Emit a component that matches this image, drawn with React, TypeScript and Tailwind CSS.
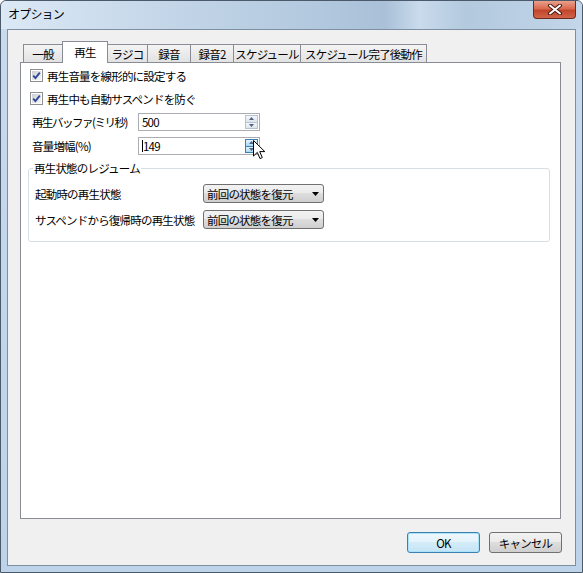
import React from "react";

const tabs = [
  { label: "一般", w: 40 },
  { label: "再生", w: 46, active: true },
  { label: "ラジコ", w: 41 },
  { label: "録音", w: 44 },
  { label: "録音2", w: 44 },
  { label: "スケジュール", w: 68 },
  { label: "スケジュール完了後動作", w: 127 },
];

function Check() {
  return (
    <div className="w-[13px] h-[13px] border border-[#8e8f8f] bg-white p-px shrink-0">
      <div className="w-full h-full bg-gradient-to-br from-[#cbcfd5] to-[#f6f6f6] flex items-center justify-center">
        <svg width="9" height="9" viewBox="0 0 9 9">
          <path d="M1.2 4.6 L3.4 7 L7.8 1.6" fill="none" stroke="#2b4597" strokeWidth="1.8" />
        </svg>
      </div>
    </div>
  );
}

function Spin({ hot }: { hot?: boolean }) {
  const half = hot
    ? "border-[#3c7fb1] bg-gradient-to-b from-[#e5f4fc] to-[#a7d9f5]"
    : "border-[#b8c3d1] bg-gradient-to-b from-[#f5f7fa] to-[#dde4ec]";
  return (
    <div className="flex flex-col w-[13px] my-px mr-px">
      <div className={"h-[8px] border flex items-center justify-center " + half}>
        <svg width="5" height="3" viewBox="0 0 5 3">
          <path d="M0 3 L2.5 0 L5 3 Z" fill="#4d6185" />
        </svg>
      </div>
      <div className={"h-[8px] -mt-px border flex items-center justify-center " + half}>
        <svg width="5" height="3" viewBox="0 0 5 3">
          <path d="M0 0 L5 0 L2.5 3 Z" fill="#4d6185" />
        </svg>
      </div>
    </div>
  );
}

function NumField({ value, hot, caret }: { value: string; hot?: boolean; caret?: boolean }) {
  return (
    <div className="w-[122px] h-[18px] border border-[#abadb3] bg-white flex shrink-0">
      <div className="flex-1 flex items-center pl-[3px]">
        {caret && <span className="w-px h-[12px] bg-black" />}
        <span>{value}</span>
      </div>
      <Spin hot={hot} />
    </div>
  );
}

function Combo() {
  return (
    <div className="w-[121px] h-[19px] shrink-0 border border-[#707070] rounded-[3px] bg-[linear-gradient(180deg,#f2f2f2_0%,#ebebeb_45%,#dddddd_50%,#cfcfcf_100%)] flex items-center pl-[3px] pr-[4px]">
      <span className="flex-1">前回の状態を復元</span>
      <svg width="7" height="4" viewBox="0 0 7 4">
        <path d="M0 0 L7 0 L3.5 4 Z" fill="#000" />
      </svg>
    </div>
  );
}

export default function App() {
  return (
    <div className="relative w-[583px] h-[573px] flex flex-col border border-[#4a5a6b] rounded-t-[6px] bg-gradient-to-b from-[#c8daee] to-[#bcd3ea] font-['Noto_Sans_CJK_JP','Noto_Sans',sans-serif] text-[11.5px] leading-[14px] tracking-[-0.8px] text-black whitespace-nowrap overflow-hidden">
      {/* title bar */}
      <div className="h-[28px] flex items-start justify-between rounded-t-[5px] bg-[linear-gradient(90deg,#dce8f5_0%,#c6d8ea_25%,#b2c8de_55%,#a9c0d8_66%,#c9dbec_72%,#b3c9de_80%,#c3d6ea_100%)]">
        <span className="pl-[7px] pt-[6px] text-[12px]">オプション</span>
        <div className="mr-[6px] w-[43px] h-[18px] rounded-b-[4px] border border-t-0 border-[#6b2b1f] bg-[linear-gradient(180deg,#eaa08c_0%,#d86a4f_45%,#c2452b_55%,#d0654a_100%)] flex items-center justify-center">
          <svg width="16" height="11" viewBox="0 0 16 11">
            <path d="M3 1.5 L13 9.5 M13 1.5 L3 9.5" stroke="#4a1a12" strokeWidth="4" strokeLinecap="round" />
            <path d="M3 1.5 L13 9.5 M13 1.5 L3 9.5" stroke="#fff" strokeWidth="2" strokeLinecap="round" />
          </svg>
        </div>
      </div>

      {/* client area */}
      <div className="flex-1 mx-[6px] mb-[6px] border border-[#7e8fa1] bg-[#f0f0f0] flex flex-col pl-[12px] pr-[14px] pt-[11px]">
        <div className="flex items-end h-[22px] -mb-px ml-[3px] relative z-10">
          {tabs.map((t, i) =>
            t.active ? (
              <div
                key={t.label}
                style={{ width: t.w }}
                className={"h-[22px] border border-b-0 border-[#898c95] bg-white flex items-start justify-center pt-[3px] relative z-10 " + (i ? "-ml-px" : "")}
              >
                {t.label}
              </div>
            ) : (
              <div
                key={t.label}
                style={{ width: t.w }}
                className={"h-[18px] mb-px border border-b-0 border-[#898c95] bg-gradient-to-b from-[#f4f4f4] to-[#e2e2e2] flex items-center justify-center " + (i ? "-ml-px" : "")}
              >
                {t.label}
              </div>
            )
          )}
        </div>

        <div className="flex-1 border border-[#898c95] bg-white flex flex-col">
          <div className="flex items-center gap-[4px] ml-[9px] mt-[6px] h-[13px]">
            <Check />
            <span>再生音量を線形的に設定する</span>
          </div>
          <div className="flex items-center gap-[4px] ml-[9px] mt-[10px] h-[13px]">
            <Check />
            <span>再生中も自動サスペンドを防ぐ</span>
          </div>
          <div className="flex items-center ml-[11px] mt-[8px]">
            <span className="w-[106px] shrink-0 tracking-[-1.5px]">再生バッファ(ミリ秒)</span>
            <NumField value="500" />
          </div>
          <div className="flex items-center ml-[11px] mt-[6px]">
            <span className="w-[106px] shrink-0">音量増幅(%)</span>
            <NumField value="149" hot caret />
          </div>

          <fieldset className="ml-[7px] mr-[10px] mt-[6px] border border-[#d5dfe5] rounded-[3px] pb-[12px]">
            <legend className="ml-[4px] px-px">再生状態のレジューム</legend>
            <div className="flex items-center pl-[6px] mt-[9px]">
              <span className="w-[168px] shrink-0">起動時の再生状態</span>
              <Combo />
            </div>
            <div className="flex items-center pl-[6px] mt-[7px]">
              <span className="w-[168px] shrink-0">サスペンドから復帰時の再生状態</span>
              <Combo />
            </div>
          </fieldset>
        </div>

        <div className="flex justify-end gap-[9px] pt-[13px] pb-[12px] mr-[-1px]">
          <div className="w-[73px] h-[21px] border border-[#3c7fb1] rounded-[3px] shadow-[inset_0_0_0_1px_#a8e2fb] bg-[linear-gradient(180deg,#eef8fd_0%,#e4f3fb_45%,#d3ecf9_50%,#c6e4f5_100%)] flex items-center justify-center">
            OK
          </div>
          <div className="w-[73px] h-[21px] border border-[#707070] rounded-[3px] bg-[linear-gradient(180deg,#f2f2f2_0%,#ebebeb_45%,#dddddd_50%,#cfcfcf_100%)] flex items-center justify-center">
            キャンセル
          </div>
        </div>
      </div>

      {/* mouse pointer */}
      <svg className="absolute left-[252px] top-[139px]" width="13" height="20" viewBox="0 0 13 20">
        <path d="M0.5 0.5 L0.5 16 L4.3 12.4 L7 18.6 L9.3 17.6 L6.7 11.6 L11.8 11.6 Z" fill="#fff" stroke="#000" strokeWidth="1" strokeLinejoin="round" />
      </svg>
    </div>
  );
}
